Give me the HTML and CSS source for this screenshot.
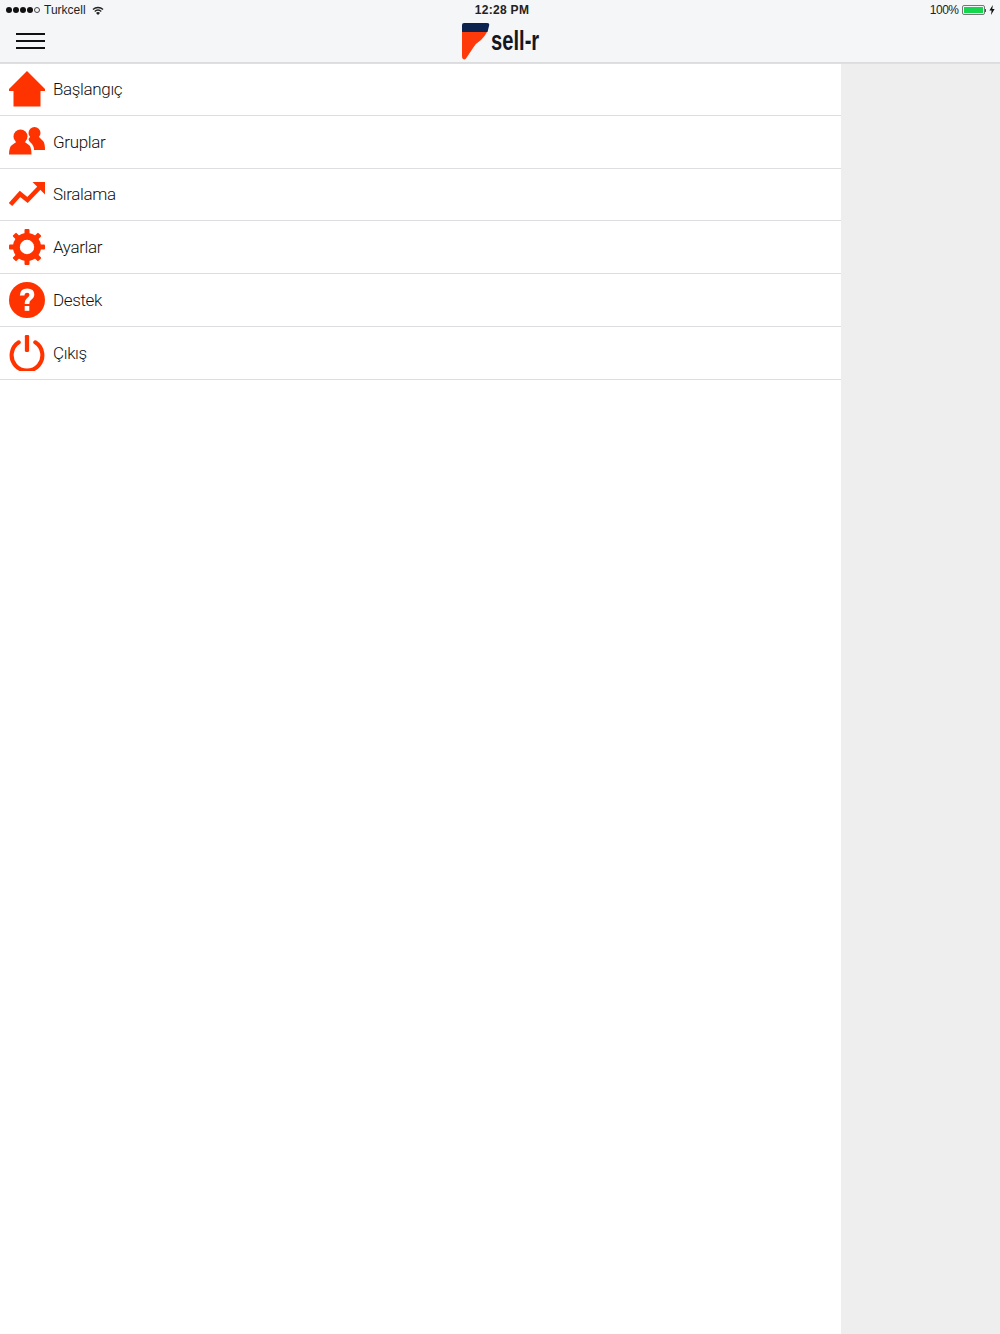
FILE: index.html
```html
<!DOCTYPE html>
<html lang="tr">
<head>
<meta charset="utf-8">
<title>sell-r</title>
<link rel="stylesheet" href="styles.css">
</head>
<body>
<header class="top">
  <div class="status">
    <div class="status-left">
      <span class="signal"><i></i><i></i><i></i><i></i><i class="empty"></i></span>
      <span class="carrier">Turkcell</span>
      <svg class="wifi" viewBox="0 0 12 9" width="12" height="9"><path d="M0.5 3 A8 8 0 0 1 11.5 3 L10.6 4 A6.6 6.6 0 0 0 1.4 4 Z" fill="#222"/><path d="M2.3 5 A5 5 0 0 1 9.7 5 L8.8 6 A3.7 3.7 0 0 0 3.2 6 Z" fill="#222"/><path d="M4 6.9 A2.6 2.6 0 0 1 8 6.9 L6 9 Z" fill="#222"/></svg>
    </div>
    <div class="clock">12:28 PM</div>
    <div class="status-right">
      <span class="pct">100%</span>
      <span class="battery"><span class="battery-fill"></span></span>
      <span class="battery-tip"></span>
      <svg class="bolt" viewBox="0 0 6 10" width="6" height="10"><path d="M3.8 0 L0.4 5.6 H2.6 L2 10 L5.6 4 H3.3 Z" fill="#111"/></svg>
    </div>
  </div>
  <div class="nav">
    <button class="burger" aria-label="Menü"><span></span><span></span><span></span></button>
    <div class="logo">
      <svg class="logo-mark" viewBox="0 0 29 38" width="29" height="38">
        <path d="M3 1 H26 Q29 1 28 4 L26.5 10 H1 V3 Q1 1 3 1 Z" fill="#0c2350"/>
        <path d="M1 10 H26 Q24 14 20 18 Q15 21 12 26 Q8 32 5 36.5 Q3.5 38 2 37 Q1 36.5 1 34 Z" fill="#ff3a0a"/>
      </svg>
      <span class="logo-text">sell-r</span>
    </div>
  </div>
</header>
<div class="page">
  <nav class="menu">
    <a class="item">
      <svg class="ico" viewBox="0 0 36 36"><path d="M18 0 L36 18 V20 H31.5 V35.5 H4.5 V20 H0 V18 Z" fill="#ff3300"/></svg>
      <span>Başlangıç</span>
    </a>
    <a class="item">
      <svg class="ico" viewBox="0 0 36 30"><circle cx="11.5" cy="9.5" r="7" fill="#ff3300"/><path d="M0 27.5 Q0 20 3 18 L8 14.5 H15 L20 18 Q22.5 20 22.5 27.5 Z" fill="#ff3300"/><circle cx="25.5" cy="6" r="6" fill="#ff3300"/><path d="M21 10 H30 L34 14 Q36 16 36 23 H25 Q25 18 21 15 Q19.5 13.5 19.5 12 Z" fill="#ff3300"/></svg>
      <span>Gruplar</span>
    </a>
    <a class="item">
      <svg class="ico" viewBox="0 0 36 25"><path d="M1.5 23 L11 12.5 L18.5 18.5 L30.5 6" fill="none" stroke="#ff3300" stroke-width="4.6"/><path d="M23.5 0.5 H36 V13 Z" fill="#ff3300"/></svg>
      <span>Sıralama</span>
    </a>
    <a class="item">
      <svg class="ico" viewBox="0 0 36 36"><g fill="#ff3300"><rect x="15.5" y="0" width="5" height="36" rx="1"/><rect x="15.5" y="0" width="5" height="36" rx="1" transform="rotate(45 18 18)"/><rect x="15.5" y="0" width="5" height="36" rx="1" transform="rotate(90 18 18)"/><rect x="15.5" y="0" width="5" height="36" rx="1" transform="rotate(135 18 18)"/></g><circle cx="18" cy="18" r="10.5" fill="none" stroke="#ff3300" stroke-width="7"/><circle cx="18" cy="18" r="7.2" fill="#fff"/></svg>
      <span>Ayarlar</span>
    </a>
    <a class="item">
      <svg class="ico" viewBox="0 0 36 36"><circle cx="18" cy="18" r="18" fill="#ff3300"/><path d="M10.8 13.5 Q11 6.5 18.2 6.5 Q25.3 6.5 25.3 12.5 Q25.3 15.8 22 18 Q20.3 19.2 20.3 22 H15.7 Q15.7 17.8 18.5 15.8 Q20.5 14.4 20.5 12.8 Q20.5 10.8 18.1 10.8 Q15.6 10.8 15.5 13.5 Z" fill="#fff"/><rect x="15.7" y="24" width="4.6" height="4.8" fill="#fff"/></svg>
      <span>Destek</span>
    </a>
    <a class="item">
      <svg class="ico" viewBox="0 0 36 37"><path d="M9.5 7.5 A15.8 15.8 0 1 0 26.5 7.5" fill="none" stroke="#ff3300" stroke-width="4.2" stroke-linecap="round"/><rect x="15.8" y="0" width="4.4" height="17.5" rx="1.2" fill="#ff3300"/></svg>
      <span>Çıkış</span>
    </a>
  </nav>
  <aside class="side"></aside>
</div>
</body>
</html>
```

FILE: styles.css
```css
* { box-sizing: border-box; }
html, body { margin: 0; padding: 0; height: 100%; }
body {
  width: 1000px;
  height: 1334px;
  overflow: hidden;
  display: flex;
  flex-direction: column;
  background: #fff;
  font-family: "Liberation Sans", Arial, sans-serif;
  color: #222;
}
.top {
  position: relative;
  z-index: 1;
  height: 63px;
  flex: none;
  background: #f5f6f8;
  border-bottom: 1px solid #dcdcde;
  box-shadow: 0 1px 0 #dfdfe1;
}
.status {
  height: 20px;
  display: grid;
  grid-template-columns: 1fr auto 1fr;
  align-items: center;
  padding: 0 5px 0 6px;
  font-size: 12px;
  color: #222;
}
.status-left, .status-right { display: flex; align-items: center; }
.status-right { justify-content: flex-end; }
.signal { display: flex; gap: 1px; margin-right: 4px; }
.signal i { width: 6px; height: 6px; border-radius: 50%; background: #111; }
.signal i.empty { background: none; border: 1px solid #444; }
.carrier { font-size: 12px; }
.wifi { margin-left: 6px; }
.clock { font-size: 12px; font-weight: 700; letter-spacing: 0.3px; padding-left: 3px; }
.pct { font-size: 12px; letter-spacing: -0.5px; margin-right: 3px; }
.battery {
  width: 23px;
  height: 10px;
  border: 1px solid #777;
  border-radius: 2px;
  padding: 1px;
  display: flex;
}
.battery-fill { flex: 1; background: #16d650; }
.battery-tip { width: 1.5px; height: 3px; background: #555; margin-right: 3px; }
.nav {
  height: 42px;
  display: grid;
  grid-template-columns: 1fr auto 1fr;
  align-items: center;
}
.burger {
  justify-self: start;
  margin: 0 0 0 16px;
  padding: 0;
  width: 29px;
  height: 16px;
  border: 0;
  background: none;
  display: flex;
  flex-direction: column;
  justify-content: space-between;
}
.burger span { display: block; height: 2px; background: #111; }
.logo {
  grid-column: 2;
  display: flex;
  align-items: center;
  gap: 1px;
  margin-left: 1px;
}
.logo-mark { display: block; }
.logo-text {
  display: inline-block;
  font-size: 28px;
  font-weight: 700;
  color: #15171c;
  width: 49px;
  transform: scaleX(0.72);
  transform-origin: left center;
  white-space: nowrap;
  line-height: 1;
}
.page { flex: 1; display: flex; min-height: 0; }
.menu { width: 841px; flex: none; background: #fff; display: flex; flex-direction: column; }
.side { flex: 1; background: #eeeeee; }
.item {
  height: 52.75px;
  flex: none;
  display: flex;
  align-items: center;
  gap: 8px;
  padding-left: 9px;
  border-bottom: 1px solid #dedee0;
  font-family: Roboto, "Liberation Sans", Arial, sans-serif;
  font-weight: 300;
  font-size: 17px;
  letter-spacing: -0.35px;
  color: #111;
}
.ico { width: 36px; height: 36px; flex: none; display: block; }
```
